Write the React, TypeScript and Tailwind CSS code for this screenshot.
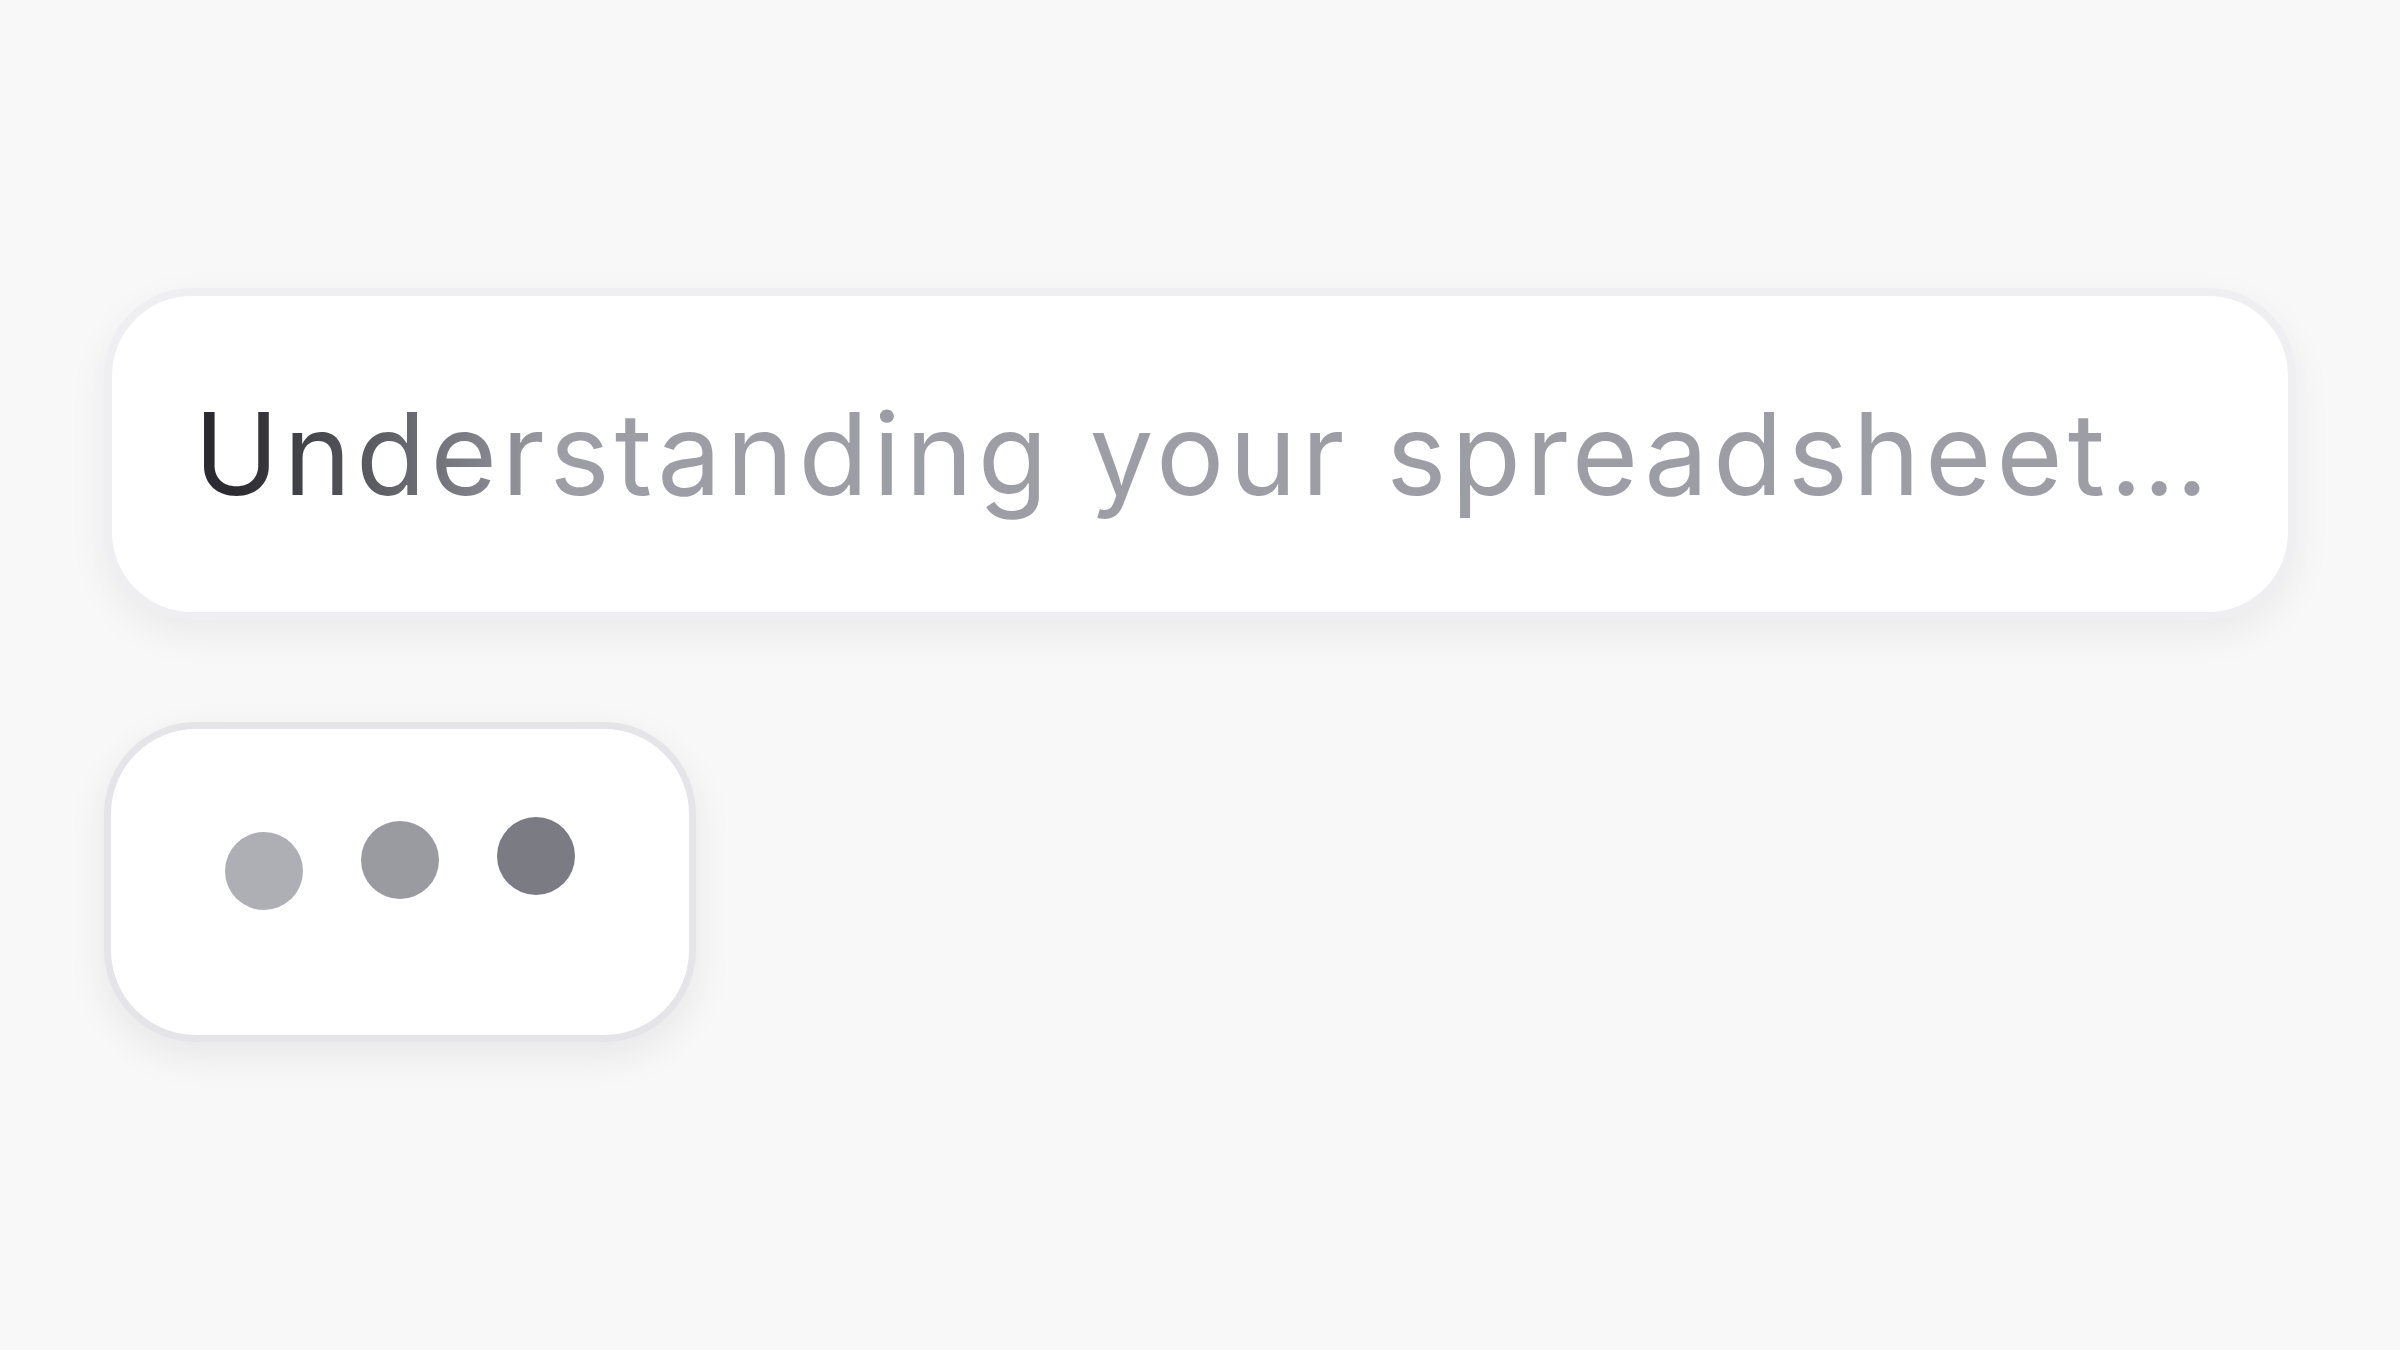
import React from "react";

const font = { fontFamily: "Inter, 'Noto Sans', sans-serif" };

function ThinkingCard() {
  return (
    <div className="w-[2192px] h-[332px] flex items-center rounded-[88px] border-[8px] border-[#efeff2] bg-white shadow-[0_14px_40px_rgba(20,20,40,0.06)] pl-[82px]">
      <span
        className="text-[114px] leading-[1.3] font-normal tracking-[4.85px] whitespace-nowrap bg-[linear-gradient(90deg,#2a2a30_0%,#2a2a30_2%,#9d9da6_18%,#9d9da6_100%)] bg-clip-text text-transparent"
        style={font}
      >
        Understanding your spreadsheet<span className="tracking-[0px]">...</span>
      </span>
    </div>
  );
}

function TypingDots() {
  return (
    <div className="w-[592px] h-[320px] flex items-center justify-center gap-[58px] rounded-[92px] border-[7px] border-[#e4e4e9] bg-white shadow-[0_14px_40px_rgba(20,20,40,0.07)]">
      <span className="size-[78px] rounded-full bg-[#aeaeb5] -translate-y-[11px]" />
      <span className="size-[78px] rounded-full bg-[#9a9aa1] -translate-y-[22px]" />
      <span className="size-[78px] rounded-full bg-[#7b7b83] -translate-y-[26px]" />
    </div>
  );
}

export default function App() {
  return (
    <div className="min-h-screen w-full bg-[#f8f8f8] pt-[288px] pl-[104px]">
      <div className="flex flex-col items-start gap-[102px]">
        <ThinkingCard />
        <TypingDots />
      </div>
    </div>
  );
}
